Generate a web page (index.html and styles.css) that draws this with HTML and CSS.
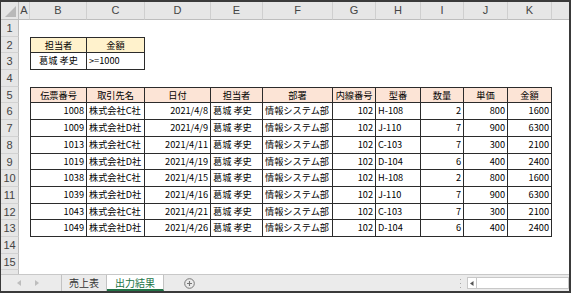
FILE: index.html
```html
<!DOCTYPE html>
<html lang="ja">
<head>
    <meta charset="UTF-8">
    <title>出力結果</title>
    <link rel="stylesheet" href="styles.css">
</head>
<body>
    <div class="window">
        <div class="sheet" id="sheet">
            <div class="corner"></div>
            <div class="colhdr">A</div>
            <div class="colhdr">B</div>
            <div class="colhdr">C</div>
            <div class="colhdr">D</div>
            <div class="colhdr">E</div>
            <div class="colhdr">F</div>
            <div class="colhdr">G</div>
            <div class="colhdr">H</div>
            <div class="colhdr">I</div>
            <div class="colhdr">J</div>
            <div class="colhdr">K</div>
            <div class="colhdr last"></div>
        </div>

        <div class="tabbar">
            <div class="tab-nav">
                <svg width="4" height="6" viewBox="0 0 4 6"><path d="M4 0v6L0 3z" fill="#bdbdbd"/></svg>
                <svg width="4" height="6" viewBox="0 0 4 6"><path d="M0 0v6L4 3z" fill="#bdbdbd"/></svg>
            </div>
            <div class="tab">売上表</div>
            <div class="tab active">出力結果</div>
            <div class="tab-add">
                <svg width="11" height="11" viewBox="0 0 11 11">
                    <circle cx="5.5" cy="5.5" r="4.8" fill="none" stroke="#777" stroke-width="1"/>
                    <path d="M5.5 3v5M3 5.5h5" stroke="#777" stroke-width="1.1"/>
                </svg>
            </div>
            <div class="spacer"></div>
            <div class="splitter">
                <svg width="2" height="9" viewBox="0 0 2 9">
                    <rect x="0" y="0" width="1" height="1" fill="#aaa"/>
                    <rect x="0" y="4" width="1" height="1" fill="#aaa"/>
                    <rect x="0" y="8" width="1" height="1" fill="#aaa"/>
                </svg>
            </div>
            <div class="hscroll">
                <div class="hscroll-btn">
                    <svg width="4" height="5" viewBox="0 0 4 5"><path d="M3.5 0v5L0 2.5z" fill="#555"/></svg>
                </div>
                <div class="hscroll-track"></div>
            </div>
        </div>
    </div>

    <script>
        // sheet contents: row number -> cells A..K as [text, class]
        const data = [
            [1008, '株式会社C社', '2021/4/8', 'H-108', 2, 800, 1600],
            [1009, '株式会社D社', '2021/4/9', 'J-110', 7, 900, 6300],
            [1013, '株式会社C社', '2021/4/11', 'C-103', 7, 300, 2100],
            [1019, '株式会社D社', '2021/4/19', 'D-104', 6, 400, 2400],
            [1038, '株式会社C社', '2021/4/15', 'H-108', 2, 800, 1600],
            [1039, '株式会社D社', '2021/4/16', 'J-110', 7, 900, 6300],
            [1043, '株式会社C社', '2021/4/21', 'C-103', 7, 300, 2100],
            [1049, '株式会社D社', '2021/4/26', 'D-104', 6, 400, 2400]
        ];
        const heads = ['伝票番号', '取引先名', '日付', '担当者', '部署', '内線番号', '型番', '数量', '単価', '金額'];

        const rows = {};
        rows[2] = [null, ['担当者', 'c crit top left'], ['金額', 'c crit top']];
        rows[3] = [null, ['葛城 孝史', 'c left'], ['>=1000', 'l']];
        rows[5] = [null].concat(heads.map((h, i) => [h, 'c head top' + (i === 0 ? ' left' : '')]));
        data.forEach((d, i) => {
            rows[6 + i] = [null,
                [d[0], 'r left'], [d[1], 'l'], [d[2], 'r'], ['葛城 孝史', 'l'],
                ['情報システム部', 'l'], [102, 'r'], [d[3], 'l'],
                [d[4], 'r'], [d[5], 'r'], [d[6], 'r']
            ];
        });

        const sheet = document.getElementById('sheet');
        for (let r = 1; r <= 16; r++) {
            const hdr = document.createElement('div');
            hdr.className = 'rowhdr';
            hdr.textContent = r;
            sheet.appendChild(hdr);
            const cells = rows[r] || [];
            for (let c = 0; c < 12; c++) {
                const cell = document.createElement('div');
                const v = cells[c];
                cell.className = 'cell';
                if (v) {
                    cell.className += ' boxed ' + v[1];
                    cell.textContent = v[0];
                }
                sheet.appendChild(cell);
            }
        }
    </script>
</body>
</html>
```

FILE: styles.css
```css
* {
    margin: 0;
    padding: 0;
    box-sizing: border-box;
}

body {
    background: #fff;
    font-family: "Noto Sans CJK JP", "Noto Sans", sans-serif;
    font-size: 9px;
    color: #000;
}

.window {
    width: 571px;
    height: 293px;
    border: 1px solid #3a3a3a;
    border-top-width: 2px;
    border-bottom-width: 2px;
    border-right-width: 2px;
    display: flex;
    flex-direction: column;
    overflow: hidden;
}

/* Sheet grid */
.sheet {
    flex: 1;
    overflow: hidden;
    display: grid;
    grid-template-columns: 18px 11px 57px 58px 66px 52px 70px 43px 45px 43px 44px 44px 1fr;
    grid-template-rows: 18px;
    grid-auto-rows: 16.7px;
    align-content: start;
}

.corner {
    background: #e6e6e6;
    border-right: 1px solid #bdbdbd;
    border-bottom: 1px solid #bdbdbd;
    position: relative;
}

.corner::after {
    content: "";
    position: absolute;
    right: 2px;
    bottom: 2px;
    border-style: solid;
    border-width: 0 0 11px 11px;
    border-color: transparent transparent #b9b9b9 transparent;
}

.colhdr {
    background: #e6e6e6;
    border-right: 1px solid #cfcfcf;
    border-bottom: 1px solid #bdbdbd;
    color: #444;
    font-family: "Liberation Sans", sans-serif;
    font-size: 11px;
    text-align: center;
    line-height: 17px;
}

.colhdr.last {
    border-right: none;
}

.rowhdr {
    background: #e6e6e6;
    border-right: 1px solid #bdbdbd;
    border-bottom: 1px solid #d2d2d2;
    color: #444;
    font-family: "Liberation Sans", sans-serif;
    font-size: 11px;
    text-align: center;
    line-height: 16px;
}

.cell {
    font-size: 9.2px;
    line-height: 15px;
    white-space: nowrap;
    overflow: hidden;
    padding: 0 2px;
}

/* Table cells */
.boxed {
    border-right: 1px solid #2b2b2b;
    border-bottom: 1px solid #2b2b2b;
}

.boxed.top {
    border-top: 1px solid #2b2b2b;
}

.boxed.left {
    border-left: 1px solid #2b2b2b;
}

.crit {
    background: #fff2cc;
}

.head {
    background: #fce4d6;
}

.c { text-align: center; }
.l { text-align: left; }
.r { text-align: right; }

/* Sheet tabs */
.tabbar {
    height: 17px;
    flex: none;
    display: flex;
    align-items: stretch;
    background: #ebebeb;
    border-top: 1px solid #c8c8c8;
    font-size: 10px;
}

.tab-nav {
    width: 61px;
    display: flex;
    align-items: center;
    gap: 14px;
    padding-left: 16px;
    border-right: 1px solid #c2c2c2;
}

.tab {
    padding: 0 7px;
    color: #333;
    line-height: 15px;
    border-right: 1px solid #c2c2c2;
}

.tab.active {
    background: #fff;
    color: #217346;
    border-bottom: 2px solid #217346;
    padding: 0 8px;
}

.tab-add {
    width: 50px;
    display: flex;
    align-items: center;
    justify-content: center;
}

.spacer {
    flex: 1;
}

.splitter {
    width: 12px;
    display: flex;
    align-items: center;
    justify-content: center;
}

.hscroll {
    width: 102px;
    display: flex;
    padding: 2px 0 2px 0;
}

.hscroll-btn {
    width: 10px;
    background: #fff;
    border: 1px solid #c8c8c8;
    display: flex;
    align-items: center;
    justify-content: center;
}

.hscroll-track {
    flex: 1;
    background: #fff;
    border: 1px solid #c8c8c8;
    border-left: none;
}
```
